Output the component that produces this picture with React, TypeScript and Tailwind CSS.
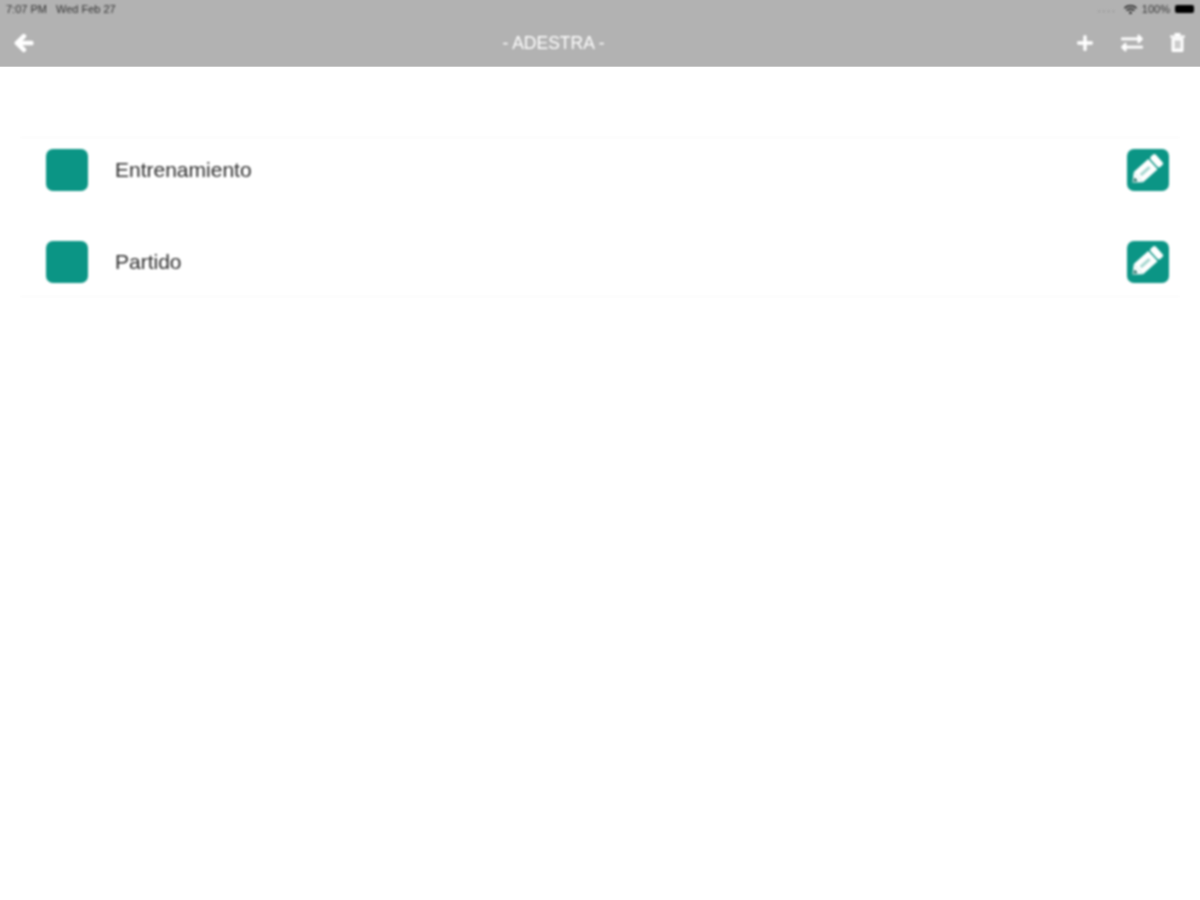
import { FaArrowLeft, FaPlus, FaExchangeAlt, FaWifi } from "react-icons/fa";

const font = "font-['Liberation_Sans','Inter',sans-serif]";

function PencilIcon() {
  return (
    <svg viewBox="0 0 42 42" className="w-[42px] h-[42px]">
      <g transform="translate(5.5 33.5) rotate(-42)" fill="#fff">
        <polygon points="0,0 8,-7 8,7" />
        <rect x="8" y="-7" width="19.5" height="14" />
        <rect x="29" y="-7" width="7" height="14" rx="2" />
        <rect x="11" y="-1.6" width="12" height="3.2" fill="#a9d8d1" />
        <polygon points="1,0 5,-2.4 5,2.4" fill="#1f6f65" />
      </g>
    </svg>
  );
}

function TrashIcon() {
  return (
    <svg viewBox="0 0 15 19" className="w-[15px] h-[19px]">
      <rect x="0" y="2.5" width="15" height="2" fill="#fff" />
      <rect x="4.5" y="0" width="6" height="3" fill="#fff" />
      <path d="M1.5 4.5h12v13a1.5 1.5 0 0 1-1.5 1.5H3a1.5 1.5 0 0 1-1.5-1.5z" fill="#fff" />
      <rect x="4" y="7" width="7" height="9" fill="#e4e4e4" />
      <rect x="6" y="8" width="1" height="7" fill="#a8a8a8" />
      <rect x="8.5" y="8" width="1" height="7" fill="#a8a8a8" />
    </svg>
  );
}

function Row({ label }: { label: string }) {
  return (
    <div className="flex items-center h-[42px] pl-[26px] pr-[11px]">
      <div className="w-[42px] h-[42px] rounded-[7px] bg-[#0b9585]" />
      <span className="ml-[27px] text-[21px] leading-[24px] text-[#2c2c2c] flex-1">{label}</span>
      <div className="w-[42px] h-[42px] rounded-[7px] bg-[#0b9585]">
        <PencilIcon />
      </div>
    </div>
  );
}

export default function App() {
  return (
    <div className={`${font} w-[1200px] h-[900px] bg-white overflow-hidden`}>
      <header className="h-[67px] bg-[#b2b2b2] border-b border-[#c9c9c9] flex flex-col">
        <div className="h-[18px] flex items-center justify-between pl-[6px] pr-[6px] text-[11px] leading-[12px] text-[#333333] blur-[0.8px]">
          <div className="flex gap-[9px]">
            <span>7:07 PM</span>
            <span>Wed Feb 27</span>
          </div>
          <div className="flex items-center gap-[5px]">
            <span className="text-[#777777] text-[10px] tracking-[2px] mr-[2px]">....</span>
            <FaWifi className="w-[13px] h-[11px] text-[#1f1f1f]" />
            <span>100%</span>
            <div className="w-[19px] h-[8px] rounded-[2px] bg-black" />
          </div>
        </div>
        <div className="flex-1 flex items-center pl-[14px] pr-[15px] pt-[1px] blur-[0.8px]">
          <FaArrowLeft className="text-white w-[20px] h-[20px]" stroke="currentColor" strokeWidth={40} />
          <div className="flex-1 text-center text-white text-[17.5px] leading-[20px] pr-[3px]">- ADESTRA -</div>
          <div className="flex items-center">
            <FaPlus className="text-white w-[18px] h-[18px]" />
            <FaExchangeAlt className="text-white w-[24px] h-[22px] ml-[26px]" />
            <div className="ml-[26px] flex">
              <TrashIcon />
            </div>
          </div>
        </div>
      </header>
      <main className="pt-[70px] px-[20px] blur-[0.8px]">
        <div className="border-t border-b border-[#f8f8f8] pt-[11px] pb-[13px] flex flex-col gap-[50px]">
          <Row label="Entrenamiento" />
          <Row label="Partido" />
        </div>
      </main>
    </div>
  );
}
